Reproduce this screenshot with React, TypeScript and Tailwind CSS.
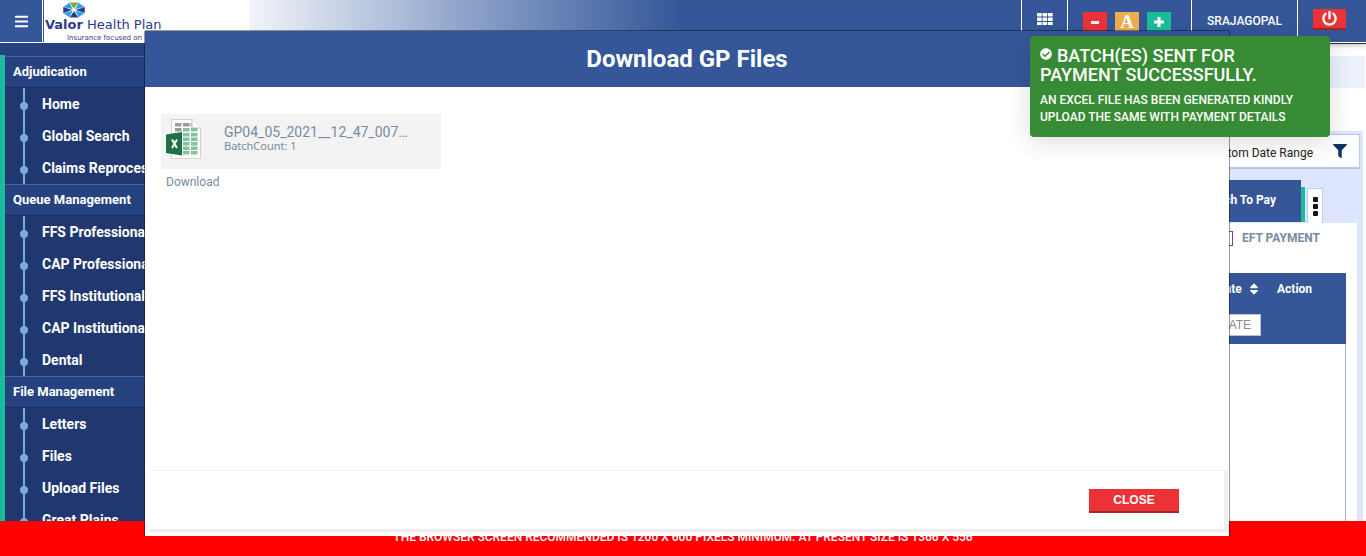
import React from "react";
import { FaBars, FaCheckCircle, FaFilter, FaPowerOff, FaSort } from "react-icons/fa";

const sections = [
  { title: "Adjudication", items: ["Home", "Global Search", "Claims Reprocessing"] },
  {
    title: "Queue Management",
    items: ["FFS Professional", "CAP Professional", "FFS Institutional", "CAP Institutional", "Dental"],
  },
  { title: "File Management", items: ["Letters", "Files", "Upload Files", "Great Plains"] },
];

function LogoMark() {
  const wedges = ["#86a83e", "#2ea3dc", "#2b3990", "#2ea3dc", "#2b3990", "#2ea3dc", "#2b3990", "#2ea3dc"];
  return (
    <svg width="26" height="17" viewBox="-13 -9 26 17" aria-hidden="true">
      {wedges.map((fill, i) => (
        <g key={i} transform={`scale(1.45 1) rotate(${i * 45})`}>
          <path d="M0 -1.200 L-3 -7.400 L3 -7.400 Z" fill={fill} />
        </g>
      ))}
    </svg>
  );
}

function GridIcon() {
  return (
    <svg width="16" height="12" viewBox="0 0 16 12" fill="currentColor" aria-hidden="true">
      {[0, 4.5, 9].map((y) =>
        [0, 5.5, 11].map((x) => <rect key={`${x}-${y}`} x={x} y={y} width="4.700" height="3.400" rx=".6" />),
      )}
    </svg>
  );
}

function ExcelIcon() {
  return (
    <svg width="35" height="40" viewBox="0 0 35 40" aria-hidden="true">
      <path d="M5.5 .5 H26 L34.5 9 V39.5 H5.5 Z" fill="#fff" stroke="#d2d2d2" />
      <path d="M26 .5 V9 H34.5" fill="#fff" stroke="#c6c6c6" />
      <path d="M9 4h6.500v3.500h-6.500zM17 4h6.500v3.500h-6.500zM24.500 4h1v3.500h-1zM9 9h6.500v3.500h-6.500z" fill="#9b9b9b" />
      <g fill="#84c3a0">
        {[9, 14, 18.5, 23, 27.5, 32].map((y) => (
          <path key={y} d={`M17 ${y}h6.500v3.500h-6.500zM25 ${y}h6.500v3.500h-6.500z`} />
        ))}
      </g>
      <path d="M0 15.500 L16 13 V36.500 L0 34 Z" fill="#1e7145" />
      <path d="M6 20.500 L11 29 M11 20.500 L6 29" stroke="#fff" strokeWidth="2" />
    </svg>
  );
}

function Header() {
  return (
    <header className="relative flex h-[43px] shrink-0 border-b border-white bg-[#355799] text-white shadow-[0_1px_0_#26364f,0_2px_5px_rgba(0,0,0,0.3)]">
      <button type="button" aria-label="Menu" className="flex w-[43px] items-center justify-center border-r border-white">
        <FaBars size={15} />
      </button>
      <div className="ml-px flex w-[205px] flex-col bg-white pl-px pt-px font-['DejaVu_Sans',sans-serif] text-[#2e3a8c]">
        <div className="pl-4">
          <LogoMark />
        </div>
        <div className="whitespace-nowrap text-[13px] leading-[13px]">
          <span className="font-bold">Valor</span> Health Plan
        </div>
        <div className="pl-[22px] text-[7px] leading-[14px]">Insurance focused on</div>
      </div>
      <div className="flex-1 bg-linear-to-r from-[#f2f4f9] from-0% to-[#355799] to-[430px]" />
      <div className="flex w-[46px] items-center justify-center border-l border-white pb-1">
        <button type="button" aria-label="Applications">
          <GridIcon />
        </button>
      </div>
      <div className="flex w-[124px] gap-2 border-l border-white pl-[15px] pt-3">
        <button type="button" aria-label="Decrease text" className="flex h-5 w-6 items-center justify-center bg-[#ec3237]">
          <span className="h-[3px] w-2 bg-white" />
        </button>
        <button
          type="button"
          aria-label="Default text"
          className="flex h-5 w-6 items-center justify-center bg-[#f0ad4e] font-['Liberation_Serif',serif] text-[19px] font-bold leading-5"
        >
          A
        </button>
        <button type="button" aria-label="Increase text" className="flex h-5 w-6 items-center justify-center bg-[#1abc9c]">
          <svg width="10" height="10" viewBox="0 0 10 10" aria-hidden="true">
            <path d="M5 0V10M0 5H10" stroke="#fff" strokeWidth="3" />
          </svg>
        </button>
      </div>
      <div className="flex w-[106px] items-center justify-center border-l border-white text-[12px] font-medium">SRAJAGOPAL</div>
      <div className="w-[69px] border-l border-white pl-[15px] pt-[9px]">
        <button
          type="button"
          aria-label="Log out"
          className="flex h-[21px] w-[33px] items-center justify-center border-b-2 border-[#9c262c] bg-[#ec3237]"
        >
          <FaPowerOff size={15} />
        </button>
      </div>
    </header>
  );
}

function Sidebar() {
  return (
    <nav className="relative w-[220px] shrink-0 overflow-hidden bg-[#27437f] pt-3 text-white">
      <div className="border-l-[5px] border-[#1abc9c] pt-px">
        {sections.map((s) => (
          <section key={s.title}>
            <h2 className="flex h-8 items-center border-b border-t border-b-[#1a2f5c] border-t-[#4c659c] bg-[#27437f] pl-2 text-[13px] font-bold">
              {s.title}
            </h2>
            <ul className="bg-[#20386f]">
              {s.items.map((item) => (
                <li key={item} className="flex h-8 items-center">
                  <span className="ml-[15px] flex h-full w-2 items-center justify-center bg-linear-to-r from-transparent from-[3px] via-[#78addd] via-[3px] to-[#78addd] to-[5px] bg-[length:5px_100%] bg-no-repeat">
                    <span className="mt-1 size-2 rounded-full bg-[#78addd]" />
                  </span>
                  <a href="#" className="ml-[14px] whitespace-nowrap text-[14px] font-bold">
                    {item}
                  </a>
                </li>
              ))}
            </ul>
          </section>
        ))}
      </div>
    </nav>
  );
}

function Content() {
  return (
    <main className="flex min-w-0 flex-1 flex-col bg-white pt-[13px]">
      <div className="mr-px h-8 shrink-0 bg-[#edf1fd]" />
      <div className="mr-[3px] mt-[43px] flex flex-1 flex-col bg-[#dde6fe] pr-[6px] pt-[3px]">
        <div className="mr-[-3px] flex h-[34px] items-center justify-end gap-5 border border-[#b8c9ee] bg-white pr-3 pt-[3px] text-[12px] text-[#222] shadow-[0_1px_1px_rgba(0,0,0,0.15)]">
          <span>Custom Date Range</span>
          <FaFilter size={14} className="-mt-[3px] text-[#0b3566]" />
        </div>
        <div className="mt-3 flex h-[43px] justify-end pr-[34px]">
          <button type="button" className="mb-px w-[160px] bg-[#355799] pb-[3px] pr-[25px] text-right text-[12px] font-bold text-white">
            Batch To Pay
          </button>
          <span className="mb-px mt-[7px] w-1 bg-[#1abc9c]" />
          <button
            type="button"
            aria-label="More tabs"
            className="ml-0.5 mt-2 flex w-4 flex-col items-center justify-center gap-0.5 border border-b-0 border-[#b8cdfb] bg-white"
          >
            <span className="size-[5px] rounded-[1px] bg-[#151515]" />
            <span className="size-[5px] rounded-[1px] bg-[#151515]" />
            <span className="size-[5px] rounded-[1px] bg-[#151515]" />
          </button>
        </div>
        <div className="flex flex-1 flex-col bg-white pl-3 pr-[11px]">
          <label className="flex h-[50px] items-start justify-end gap-[9px] pr-[26px] pt-[7px] text-[12px] font-bold leading-4 text-[#778ca2]">
            <input type="checkbox" className="mt-px size-[15px] appearance-none border border-[#6a4c93] bg-white" />
            EFT PAYMENT
          </label>
          <div className="flex-1 border-x border-[#a9b4cd]">
            <table className="-mx-px w-[calc(100%+2px)] table-fixed bg-[#355799] text-[12px] text-white">
              <thead>
                <tr className="h-8">
                  <th />
                  <th className="w-[60px] text-left">
                    <span className="flex items-center gap-[5px]">
                      Date <FaSort size={14} />
                    </span>
                  </th>
                  <th className="w-[69px] text-left">Action</th>
                </tr>
                <tr className="h-[39px] align-top">
                  <td />
                  <td>
                    <input
                      type="text"
                      aria-label="Date filter"
                      placeholder="DATE"
                      className="mt-[9px] block h-[22px] w-[44px] border border-[#b9c3d8] bg-white pl-0.5 font-['Liberation_Sans',sans-serif] text-[12px] placeholder:text-[#888]"
                    />
                  </td>
                  <td />
                </tr>
              </thead>
            </table>
          </div>
        </div>
      </div>
    </main>
  );
}

function DownloadDialog() {
  return (
    <div
      role="dialog"
      aria-labelledby="dialog-title"
      className="absolute bottom-5 left-[145px] right-[137px] top-[31px] flex flex-col bg-white shadow-[0_-1px_0_rgba(0,0,0,0.4),1px_0_0_rgba(0,0,0,0.4),-1px_0_0_rgba(0,0,0,0.4)]"
    >
      <div className="flex h-14 shrink-0 items-center justify-center bg-[#355799]">
        <h1 id="dialog-title" className="text-[24px] font-bold text-white">
          Download GP Files
        </h1>
      </div>
      <div className="flex-1 px-4 pt-[27px] text-[#778ca2]">
        <div className="flex h-[55px] w-[280px] bg-[#f3f3f3] pl-[5px] pt-[5px]">
          <ExcelIcon />
          <div className="ml-[23px] pt-1.5">
            <div className="whitespace-nowrap text-[14px] leading-[15px]">GP04_05_2021__12_47_007…</div>
            <div className="font-['Noto_Sans',sans-serif] text-[11px] leading-[11px]">BatchCount: 1</div>
          </div>
        </div>
        <a href="#" className="mt-1 block pl-[5px] text-[12px] leading-[18px]">
          Download
        </a>
      </div>
      <div className="mb-1 ml-1 mr-px flex h-[62px] shrink-0 justify-end border-b-[3px] border-r-[4px] border-t border-[#eeeeee] border-t-[#f6f6f6] pr-[45px] pt-[18px]">
        <button
          type="button"
          className="h-6 w-[90px] border-b-2 border-[#9c262c] bg-[#ec3237] font-['Liberation_Sans',sans-serif] text-[12px] font-bold text-white"
        >
          CLOSE
        </button>
      </div>
    </div>
  );
}

function Toast() {
  return (
    <div
      role="status"
      className="absolute right-9 top-9 h-[101px] w-[300px] rounded bg-[#378b34] px-2.5 pt-2.5 font-medium text-white shadow-[0_4px_24px_rgba(0,0,0,0.15)]"
    >
      <div className="text-[18px] leading-[19px]">
        <FaCheckCircle size={12} className="mr-[5px] inline-block align-[2px]" />
        BATCH(ES) SENT FOR PAYMENT SUCCESSFULLY.
      </div>
      <div className="mt-2 text-[12px] leading-[17px]">
        AN EXCEL FILE HAS BEEN GENERATED KINDLY UPLOAD THE SAME WITH PAYMENT DETAILS
      </div>
    </div>
  );
}

export default function App() {
  return (
    <div className="relative flex h-screen flex-col overflow-hidden bg-white font-['Roboto',sans-serif]">
      <Header />
      <div className="flex min-h-0 flex-1">
        <Sidebar />
        <Content />
      </div>
      <div className="flex h-[35px] shrink-0 items-start justify-center bg-[#ff0000] pt-2 text-[12px] font-medium leading-4 text-white">
        THE BROWSER SCREEN RECOMMENDED IS 1200 X 600 PIXELS MINIMUM. AT PRESENT SIZE IS 1366 X 556
      </div>
      <DownloadDialog />
      <Toast />
    </div>
  );
}
